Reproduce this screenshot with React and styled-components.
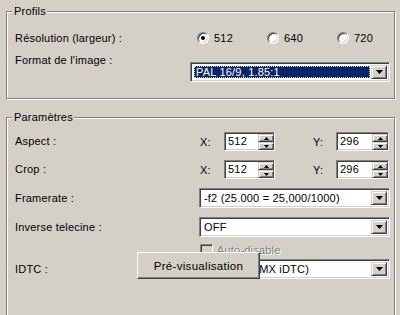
import React from 'react';
import styled, { createGlobalStyle } from 'styled-components';

const Global = createGlobalStyle`
  html, body { margin: 0; padding: 0; background: #D4D0C8; }
  body { font-family: "Liberation Sans", Arial, sans-serif; font-size: 11px; letter-spacing: 0.2px; color: #000; }
  #root { width: 400px; height: 315px; overflow: hidden; }
`;

const Page = styled.div`
  position: relative;
  width: 400px;
  height: 315px;
  box-sizing: border-box;
  padding: 5px 5px 0 6px;
  display: flex;
  flex-direction: column;
  gap: 12px;
  overflow: hidden;
`;

const Group = styled.fieldset`
  margin: 0;
  min-width: 0;
  padding: ${p => p.$pad};
  border: 1px solid #808080;
  box-shadow: inset 1px 1px 0 #fff, 1px 1px 0 #fff;
  flex: none;
`;

const Legend = styled.legend`
  margin-left: -3px;
  padding: 0 1px 0 2px;
  line-height: 13px;
  background: #D4D0C8;
`;

const Row = styled.div`
  display: grid;
  grid-template-columns: ${p => p.$label}px 1fr;
  height: ${p => p.$h}px;
  margin-top: ${p => p.$mt || 0}px;
  align-items: ${p => p.$align || 'center'};
`;

const Label = styled.div`
  line-height: 13px;
  white-space: nowrap;
  margin-top: ${p => p.$mt || 0}px;
`;

const Radios = styled.div`
  display: flex;
  padding-left: 7px;
`;

const RadioOpt = styled.div`
  width: 70px;
  display: flex;
  align-items: center;
  gap: 5px;
`;

const RadioDot = styled.span`
  position: relative;
  flex: none;
  width: 12px;
  height: 12px;
  box-sizing: border-box;
  border-radius: 50%;
  background: #fff;
  border: 1px solid;
  border-color: #808080 #fff #fff #808080;
  box-shadow: inset 1px 1px 0 #404040, inset -1px -1px 0 #D4D0C8;
  &::after {
    content: '';
    display: ${p => (p.$checked ? 'block' : 'none')};
    position: absolute;
    left: 3px;
    top: 3px;
    width: 4px;
    height: 4px;
    border-radius: 50%;
    background: #000;
  }
`;

const Sunken = styled.div`
  box-sizing: border-box;
  border: 1px solid;
  border-color: #808080 #fff #fff #808080;
  box-shadow: inset 1px 1px 0 #404040, inset -1px -1px 0 #D4D0C8;
  background: #fff;
`;

const Combo = styled(Sunken)`
  height: ${p => p.$h}px;
  margin-top: ${p => p.$mt || 0}px;
  padding: 2px;
  display: flex;
  gap: 1px;
`;

const ComboText = styled.div`
  flex: 1;
  min-width: 0;
  display: flex;
  align-items: center;
  padding-left: ${p => (p.$selected ? 2 : 1)}px;
  white-space: nowrap;
  overflow: hidden;
  color: ${p => (p.$selected ? '#fff' : '#000')};
  background: ${p => (p.$selected ? '#0A246A' : 'transparent')};
  outline: ${p => (p.$selected ? '1px dotted #D4D0C8' : 'none')};
  outline-offset: -1px;
  margin: 1px 0 1px 1px;
`;

const Raised = styled.div`
  box-sizing: border-box;
  background: #D4D0C8;
  border: 1px solid;
  border-color: #D4D0C8 #404040 #404040 #D4D0C8;
  box-shadow: inset 1px 1px 0 #fff, inset -1px -1px 0 #808080;
  display: flex;
  align-items: center;
  justify-content: center;
`;

const DropBtn = styled(Raised)`
  width: 16px;
  flex: none;
`;

const SpinGrid = styled.div`
  display: grid;
  grid-template-columns: 25px 51px 37px 24px 53px;
  align-items: center;
  height: 100%;
`;

const AxisLabel = styled.div`
  padding-left: 1px;
`;

const Spin = styled(Sunken)`
  height: 19px;
  display: flex;
  padding: 2px 0 0 2px;
`;

const SpinText = styled.div`
  flex: 1;
  padding-left: 1px;
  line-height: 13px;
`;

const SpinBtns = styled.div`
  width: 16px;
  display: flex;
  flex-direction: column;
  margin-top: -1px;
`;

const SpinBtn = styled(Raised)`
  flex: 1;
`;

const CheckRow = styled.div`
  display: flex;
  align-items: center;
  gap: 4px;
  height: 14px;
  margin-top: 6px;
  padding-left: ${p => p.$indent}px;
`;

const CheckBox = styled(Sunken)`
  width: 13px;
  height: 13px;
  background: #D4D0C8;
  flex: none;
`;

const Disabled = styled.span`
  color: #808080;
  text-shadow: 1px 1px 0 #fff;
`;

const PopupButton = styled.div`
  position: absolute;
  left: 137px;
  top: 252px;
  width: 123px;
  height: 27px;
  box-sizing: border-box;
  background: #D4D0C8;
  border: 1px solid;
  border-color: #fff #404040 #404040 #fff;
  box-shadow: inset -1px -1px 0 #808080;
  display: flex;
  align-items: center;
  justify-content: center;
  font-size: 11.5px;
  letter-spacing: 0.3px;
`;

const Arrow = ({ up }) => (
  <svg width="7" height="4" viewBox="0 0 7 4">
    <polygon points={up ? '3.5,0 7,4 0,4' : '0,0 7,0 3.5,4'} fill="#000" />
  </svg>
);

const SmallArrow = ({ up }) => (
  <svg width="5" height="3" viewBox="0 0 5 3">
    <polygon points={up ? '2.5,0 5,3 0,3' : '0,0 5,0 2.5,3'} fill="#000" />
  </svg>
);

const ComboBox = ({ text, selected, h = 20, mt }) => (
  <Combo $h={h} $mt={mt}>
    <ComboText $selected={selected}>{text}</ComboText>
    <DropBtn>
      <Arrow />
    </DropBtn>
  </Combo>
);

const SpinBox = ({ value }) => (
  <Spin>
    <SpinText>{value}</SpinText>
    <SpinBtns>
      <SpinBtn>
        <SmallArrow up />
      </SpinBtn>
      <SpinBtn>
        <SmallArrow />
      </SpinBtn>
    </SpinBtns>
  </Spin>
);

const XYRow = ({ x, y }) => (
  <SpinGrid>
    <AxisLabel>X:</AxisLabel>
    <SpinBox value={x} />
    <span />
    <AxisLabel>Y:</AxisLabel>
    <SpinBox value={y} />
  </SpinGrid>
);

export default function App() {
  return (
    <>
      <Global />
      <Page>
        <Group $pad="10px 4px 16px 8px">
          <Legend>Profils</Legend>
          <Row $label={175} $h={20}>
            <Label>Résolution (largeur) :</Label>
            <Radios>
              <RadioOpt>
                <RadioDot $checked />
                <span>512</span>
              </RadioOpt>
              <RadioOpt>
                <RadioDot />
                <span>640</span>
              </RadioOpt>
              <RadioOpt>
                <RadioDot />
                <span>720</span>
              </RadioOpt>
            </Radios>
          </Row>
          <Row $label={175} $h={28} $mt={6} $align="start">
            <Label>Format de l'image :</Label>
            <ComboBox text="PAL 16/9, 1.85:1" selected mt={8} />
          </Row>
        </Group>
        <Group $pad="8px 4px 40px 8px">
          <Legend>Paramètres</Legend>
          <Row $label={184} $h={19}>
            <Label>Aspect :</Label>
            <XYRow x="512" y="296" />
          </Row>
          <Row $label={184} $h={19} $mt={9}>
            <Label>Crop :</Label>
            <XYRow x="512" y="296" />
          </Row>
          <Row $label={184} $h={20} $mt={9}>
            <Label>Framerate :</Label>
            <ComboBox text="-f2 (25.000 = 25,000/1000)" />
          </Row>
          <Row $label={184} $h={20} $mt={9}>
            <Label>Inverse telecine :</Label>
            <ComboBox text="OFF" />
          </Row>
          <CheckRow $indent={185}>
            <CheckBox />
            <Disabled>Auto-disable</Disabled>
          </CheckRow>
          <Row $label={184} $h={20} $mt={2}>
            <Label>IDTC :</Label>
            <ComboBox text="Forcé (DV MX iDTC)" />
          </Row>
        </Group>
        <PopupButton>Pré-visualisation</PopupButton>
      </Page>
    </>
  );
}
